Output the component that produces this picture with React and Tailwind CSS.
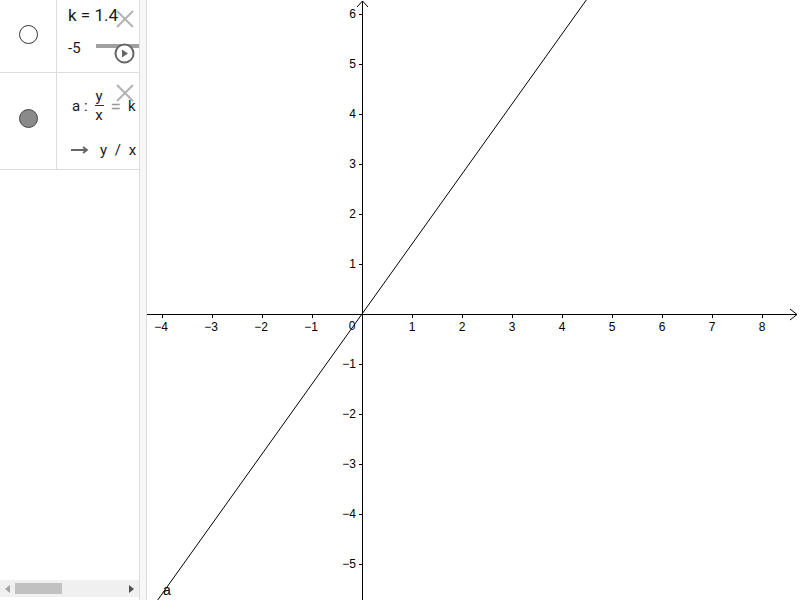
import React from "react";

function XIcon({ className }) {
  return (
    <svg className={className} width="20" height="20" viewBox="0 0 20 20">
      <path d="M2 2 L18 18 M18 2 L2 18" stroke="#b3b3b3" strokeWidth="2" fill="none" />
    </svg>
  );
}

function Graph() {
  const ox = 215;
  const oy = 314;
  const s = 50;
  const xs = [-4, -3, -2, -1, 1, 2, 3, 4, 5, 6, 7, 8];
  const ys = [-5, -4, -3, -2, -1, 1, 2, 3, 4, 5, 6];
  const lab = (n) => (n < 0 ? "\u2212" + Math.abs(n) : String(n));
  return (
    <svg width="653" height="600" viewBox="0 0 653 600" className="block">
      <g stroke="#000" strokeWidth="1" fill="none" shapeRendering="crispEdges">
        <line x1="0" y1={oy + 0.5} x2="650" y2={oy + 0.5} />
        <line x1={ox + 0.5} y1="1" x2={ox + 0.5} y2="600" />
        {xs.map((n) => (
          <line key={"xt" + n} x1={ox + n * s + 0.5} y1={oy} x2={ox + n * s + 0.5} y2={oy + 4} />
        ))}
        {ys.map((n) => (
          <line key={"yt" + n} x1={ox - 3} y1={oy - n * s + 0.5} x2={ox} y2={oy - n * s + 0.5} />
        ))}
      </g>
      <g stroke="#000" strokeWidth="1" fill="none">
        <polyline points="643,309 650,314.5 643,320" />
        <polyline points="210,7 215.5,1 221,7" />
        <line x1={ox + 314 / 1.4} y1="0" x2={ox - 286 / 1.4} y2="600" />
      </g>
      <g fontFamily="'Liberation Sans', Arial, sans-serif" fontSize="12" fill="#000">
        {xs.map((n) => (
          <text key={"xl" + n} x={ox + n * s + (n < 0 ? -1 : 0)} y={oy + 17} textAnchor="middle">
            {lab(n)}
          </text>
        ))}
        <text x={ox - 10} y={oy + 16} textAnchor="middle">0</text>
        {ys.map((n) => (
          <text key={"yl" + n} x={ox - 6} y={oy - n * s + 4} textAnchor="end">
            {lab(n)}
          </text>
        ))}
        <text x="16" y="595" fontSize="14">a</text>
      </g>
    </svg>
  );
}

export default function App() {
  return (
    <div className="flex w-[800px] h-[600px] overflow-hidden bg-white" style={{ fontFamily: "Roboto, 'Liberation Sans', sans-serif" }}>
      <div className="flex flex-col w-[140px] shrink-0 h-full border-r border-[#dcdcdc] bg-white overflow-hidden">
        <div className="flex h-[73px] border-b border-[#dcdcdc]">
          <div className="w-[57px] shrink-0 border-r border-[#dcdcdc] flex items-center justify-center pb-[4px]">
            <div className="w-[19px] h-[19px] rounded-full border border-[#333] bg-white" />
          </div>
          <div className="relative flex-1 overflow-hidden">
            <div className="absolute left-[11px] top-[3px] text-[17px] text-[#1a1a1a] whitespace-nowrap">k = 1.4</div>
            <XIcon className="absolute left-[58px] top-[9px]" />
            <div className="absolute left-[11px] top-[37px] text-[15px] text-[#1a1a1a]">-5</div>
            <div className="absolute left-[39px] top-[44px] w-[60px] h-[4px] bg-[#a0a0a0]" />
            <svg className="absolute left-[57px] top-[43px]" width="21" height="21" viewBox="0 0 21 21">
              <circle cx="10.5" cy="10.5" r="9" fill="#fff" stroke="#666" strokeWidth="2" />
              <path d="M8 6.5 L14 10.5 L8 14.5 Z" fill="#666" />
            </svg>
          </div>
        </div>
        <div className="flex h-[97px] border-b border-[#dcdcdc]">
          <div className="w-[57px] shrink-0 border-r border-[#dcdcdc] flex items-center justify-center pb-[6px]">
            <div className="w-[19px] h-[19px] rounded-full border border-[#444] bg-[#8a8a8a]" />
          </div>
          <div className="relative flex-1 overflow-hidden text-[#1a1a1a]">
            <div className="absolute left-[15px] top-[15px] flex items-center text-[15px] whitespace-nowrap">
              <span>a :</span>
              <span className="inline-flex flex-col items-center mx-[7px] leading-none">
                <span className="text-[15px] leading-[17px]">y</span>
                <span className="w-[9px] h-px bg-[#333]" />
                <span className="text-[15px] leading-[18px]">x</span>
              </span>
              <span className="text-[19px] text-[#999] leading-none">=</span>
              <span className="ml-[7px]">k</span>
            </div>
            <XIcon className="absolute left-[58px] top-[10px]" />
            <div className="absolute left-[13px] top-[66px] flex items-center text-[15px] whitespace-nowrap">
              <svg width="20" height="10" viewBox="0 0 20 10">
                <path d="M1 5 H16 M13 2 L17 5 L13 8" stroke="#666" strokeWidth="1.8" fill="none" />
              </svg>
              <span className="ml-[10px] tracking-[2px]">y / x</span>
            </div>
          </div>
        </div>
        <div className="flex-1" />
        <div className="h-[17px] mb-[3px] bg-[#f0f0f0] flex items-center">
          <svg className="ml-[5px]" width="5" height="8" viewBox="0 0 5 8"><path d="M5 0 L0 4 L5 8 Z" fill="#a3a3a3" /></svg>
          <div className="ml-[5px] w-[47px] h-[11px] bg-[#c1c1c1]" />
          <div className="flex-1" />
          <svg className="mr-[5px]" width="5" height="8" viewBox="0 0 5 8"><path d="M0 0 L5 4 L0 8 Z" fill="#505050" /></svg>
        </div>
      </div>
      <div className="w-[7px] shrink-0 h-full bg-[#f7f7f7] border-r border-[#dcdcdc]" />
      <div className="flex-1 h-full">
        <Graph />
      </div>
    </div>
  );
}
